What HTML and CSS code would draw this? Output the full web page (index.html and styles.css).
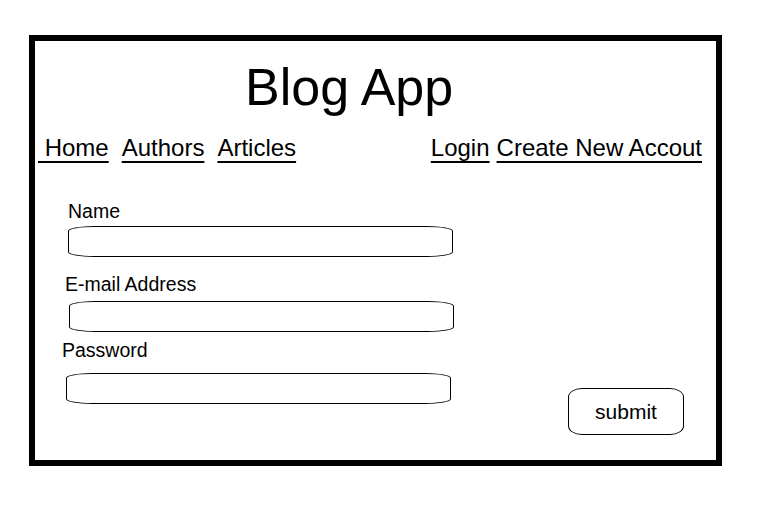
FILE: index.html
```html
<!DOCTYPE html>
<html lang="en">
<head>
<meta charset="utf-8">
<title>Blog App</title>
<link rel="stylesheet" href="styles.css">
</head>
<body>
<div class="frame">
  <h1 class="title">Blog App</h1>
  <nav class="nav">
    <div class="nav-group">
      <a class="nav-link" href="#">&nbsp;Home</a>
      <a class="nav-link" href="#">Authors</a>
      <a class="nav-link" href="#">Articles</a>
    </div>
    <div class="nav-group nav-right">
      <a class="nav-link" href="#">Login</a>
      <a class="nav-link" href="#">Create New Accout</a>
    </div>
  </nav>
  <form class="form-row">
    <div class="fields">
      <label class="label label-name">Name</label>
      <div class="input input-name"></div>
      <label class="label label-email">E-mail Address</label>
      <div class="input input-email"></div>
      <label class="label label-pass">Password</label>
      <div class="input input-pass"></div>
    </div>
    <div class="submit">submit</div>
  </form>
</div>
</body>
</html>
```
FILE: styles.css
```css
html, body {
  margin: 0;
  padding: 0;
  background: #fff;
}
body {
  font-family: "Liberation Sans", Arial, sans-serif;
  color: #000;
}
.frame {
  box-sizing: border-box;
  margin: 35px 0 0 29px;
  width: 693px;
  height: 431px;
  border: 6px solid #000;
  padding-top: 20px;
}
.title {
  margin: 0;
  padding-left: 210px;
  font-size: 52px;
  line-height: 52px;
  font-weight: normal;
}
.nav {
  display: flex;
  margin-top: 23px;
  padding: 0 14px 0 3px;
  font-size: 24px;
  line-height: 24px;
}
.nav-group {
  display: flex;
  gap: 13px;
}
.nav-right {
  margin-left: auto;
  gap: 7px;
}
.nav-link {
  color: #000;
  text-decoration: underline;
  text-decoration-thickness: 2px;
  text-underline-offset: 5px;
  white-space: pre;
}
.form-row {
  display: flex;
  align-items: flex-start;
  margin: 41px 0 0 0;
  padding-left: 26px;
}
.fields {
  display: flex;
  flex-direction: column;
  align-items: flex-start;
  width: 392px;
}
.label {
  display: block;
  font-size: 19.5px;
  line-height: 20px;
}
.input {
  box-sizing: border-box;
  width: 385px;
  height: 31px;
  border: 1px solid #000;
  border-radius: 26px / 5px;
  margin-top: 5px;
}
.label-name { margin-left: 7px; }
.input-name { margin-left: 7px; }
.label-email { margin-left: 4px; margin-top: 17px; }
.input-email { margin-left: 8px; margin-top: 7px; }
.label-pass { margin-left: 1px; margin-top: 8px; }
.input-pass { margin-left: 5px; margin-top: 13px; }
.submit {
  box-sizing: border-box;
  width: 116px;
  height: 47px;
  margin: 187px 0 0 115px;
  border: 1px solid #000;
  border-radius: 14px / 9px;
  display: flex;
  align-items: center;
  justify-content: center;
  font-size: 21px;
}
```
